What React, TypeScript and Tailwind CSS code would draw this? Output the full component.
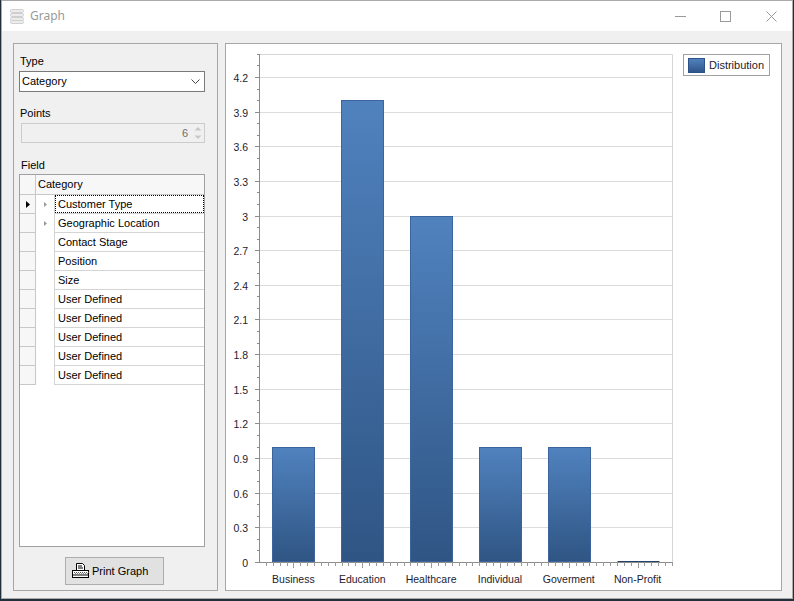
import React from "react";

const ROWS = [
  "Customer Type",
  "Geographic Location",
  "Contact Stage",
  "Position",
  "Size",
  "User Defined",
  "User Defined",
  "User Defined",
  "User Defined",
  "User Defined",
];

const DATA = [
  { label: "Business", value: 1 },
  { label: "Education", value: 4 },
  { label: "Healthcare", value: 3 },
  { label: "Individual", value: 1 },
  { label: "Goverment", value: 1 },
  { label: "Non-Profit", value: 0 },
];

// chart geometry in page coordinates
const AX = 259;
const AY = 562;
const RIGHT = 672;
const TOP = 54;
const UNIT = 115.48; // px per 1.0
const CAT = (RIGHT - AX) / DATA.length;

function TitleIcon() {
  return (
    <svg width="14" height="15" viewBox="0 0 14 15">
      {[0, 4, 8, 11].map((y) => (
        <rect key={y} x="0.5" y={y + 0.5} width="13" height="3" rx="1.2" fill="#ececec" stroke="#cfcfcf" />
      ))}
    </svg>
  );
}

function PrinterIcon() {
  return (
    <svg width="17" height="16" viewBox="0 0 17 16">
      <path d="M4.5 0.5h6l2 2v5h-8z" fill="#fff" stroke="#000" />
      <path d="M6 3h4M6 5h5" stroke="#000" />
      <rect x="0.5" y="7.5" width="16" height="7" fill="#fff" stroke="#000" />
      <path d="M1 12h15" stroke="#000" />
      {Array.from({ length: 8 }).map((_, i) => (
        <rect key={i} x={2 + i * 2} y="9" width="1" height="1" fill="#555" />
      ))}
      {Array.from({ length: 7 }).map((_, i) => (
        <rect key={i} x={3 + i * 2} y="10" width="1" height="1" fill="#888" />
      ))}
    </svg>
  );
}

function Chart() {
  const yTicks = Array.from({ length: 45 }, (_, i) => i);
  const xTicks = Array.from({ length: DATA.length * 10 }, (_, i) => i + 1);
  return (
    <svg width="457" height="546" className="shrink-0">
      <defs>
        <linearGradient id="bar" x1="0" y1="0" x2="0" y2="1">
          <stop offset="0" stopColor="#5082be" />
          <stop offset="1" stopColor="#2f5584" />
        </linearGradient>
      </defs>
      <g transform="translate(-226,-44)">
        {/* plot frame */}
        <path d={`M${AX} ${TOP + 0.5}H${RIGHT + 0.5}V${AY}`} fill="none" stroke="#d6d6d6" />
        {/* gridlines and y ticks */}
        {yTicks.map((i) => {
          const y = Math.round(AY - i * (UNIT / 10)) + 0.5;
          const major = i % 3 === 0;
          return (
            <g key={i}>
              {major && i > 0 ? <line x1={AX} x2={RIGHT} y1={y} y2={y} stroke="#dcdcdc" /> : null}
              <line x1={major ? 255 : 257} x2={AX} y1={y} y2={y} stroke="#8c8c8c" />
              {major ? (
                <text x="248" y={y + 4} textAnchor="end" fontSize="10.5" fill="#1c1c30" fontFamily="'Liberation Sans', Arial, sans-serif">
                  {String(Number((i / 10).toFixed(1)))}
                </text>
              ) : null}
            </g>
          );
        })}
        {/* bars */}
        {DATA.map((d, i) => {
          const cx = AX + CAT * (i + 0.5);
          const x = Math.round(cx - 21) + 0.5;
          const h = Math.round(d.value * UNIT);
          if (h === 0) {
            return <line key={d.label} x1={x} x2={x + 42} y1={AY - 0.5} y2={AY - 0.5} stroke="#23406a" />;
          }
          return (
            <rect key={d.label} x={x} y={AY - h + 0.5} width="42" height={h - 1} fill="url(#bar)" stroke="#3b659c" />
          );
        })}
        {/* axes */}
        <line x1={AX + 0.5} x2={AX + 0.5} y1={TOP} y2={AY + 1} stroke="#8c8c8c" />
        <line x1={AX} x2={RIGHT + 1} y1={AY + 0.5} y2={AY + 0.5} stroke="#8c8c8c" />
        {xTicks.map((i) => {
          const x = Math.round(AX + (CAT / 10) * i) + 0.5;
          const major = i % 10 === 5;
          return <line key={i} x1={x} x2={x} y1={AY} y2={AY + (major ? 6 : 4)} stroke="#9a9a9a" />;
        })}
        {DATA.map((d, i) => (
          <text
            key={d.label}
            x={AX + CAT * (i + 0.5)}
            y="583"
            textAnchor="middle"
            fontSize="10.5"
            fill="#1c1c30"
            fontFamily="'Liberation Sans', Arial, sans-serif"
          >
            {d.label}
          </text>
        ))}
      </g>
    </svg>
  );
}

export default function App() {
  return (
    <div className="w-[794px] h-[601px] bg-[#22303e] overflow-hidden font-['Liberation_Sans',Arial,sans-serif] text-[11px] text-black">
      <div className="ml-px w-[792px] h-[599px] border border-[#aaaaaa] bg-[#f0f0f0] flex flex-col">
        {/* title bar */}
        <div className="h-[30px] bg-white flex items-center shrink-0">
          <div className="ml-[8px] mt-[1px]">
            <TitleIcon />
          </div>
          <span className="ml-[6px] text-[12px] text-[#9a9a9a] font-['Noto_Sans',sans-serif]">Graph</span>
          <div className="ml-auto mr-[15px] flex items-center">
            <div className="w-[11px] h-px bg-[#9a9a9a] mt-[1px]" />
            <div className="ml-[34px] w-[11px] h-[11px] border border-[#9a9a9a]" />
            <svg className="ml-[35px]" width="11" height="11" viewBox="0 0 11 11">
              <path d="M0.5 0.5L10.5 10.5M10.5 0.5L0.5 10.5" stroke="#9a9a9a" />
            </svg>
          </div>
        </div>

        {/* body */}
        <div className="flex-1 flex gap-[7px] pl-[11px] pr-[10px] pt-[12px] pb-[7px]">
          {/* left panel */}
          <div className="w-[205px] border border-[#a6a6a6] flex flex-col pl-[5px]">
            <div className="mt-[11px] ml-px leading-[13px]">Type</div>
            <div className="mt-[3px] w-[186px] h-[21px] bg-white border border-[#7a7a7a] flex items-center pl-[2px]">
              <span>Category</span>
              <svg className="ml-auto mr-[4px]" width="9" height="6" viewBox="0 0 9 6">
                <path d="M0.5 0.5L4.5 4.5L8.5 0.5" fill="none" stroke="#444" />
              </svg>
            </div>
            <div className="mt-[15px] ml-px leading-[13px]">Points</div>
            <div className="mt-[3px] ml-[2px] w-[184px] h-[20px] bg-[#f0f0f0] border border-[#cccccc] flex items-center">
              <span className="ml-auto text-[#6d6d6d]">6</span>
              <svg className="ml-[6px] mr-[2px]" width="8" height="14" viewBox="0 0 8 14">
                <path d="M0.5 4.5L4 1L7.5 4.5z" fill="#c8c8c8" />
                <path d="M0.5 9.5L4 13L7.5 9.5z" fill="#c8c8c8" />
              </svg>
            </div>
            <div className="mt-[16px] ml-[2px] leading-[13px]">Field</div>

            {/* grid */}
            <div className="mt-[2px] w-[186px] h-[373px] bg-white border border-[#a0a0a0] flex flex-col">
              <div className="h-[20px] flex border-b border-[#c8c8c8] bg-[#f7f7f7]">
                <div className="w-[16px] border-r border-[#c8c8c8]" />
                <div className="pl-[2px] flex items-center">Category</div>
              </div>
              {ROWS.map((name, i) => (
                <div key={i} className="h-[19px] flex">
                  <div className="w-[16px] border-r border-b border-[#c8c8c8] bg-[#f7f7f7] flex items-center justify-center">
                    {i === 0 ? (
                      <svg width="4" height="7" viewBox="0 0 4 7">
                        <path d="M0 0L4 3.5L0 7z" fill="#000" />
                      </svg>
                    ) : null}
                  </div>
                  <div className="w-[18px] flex items-center justify-center">
                    {i < 2 ? (
                      <svg width="3" height="5" viewBox="0 0 3 5">
                        <path d="M0 0L3 2.5L0 5z" fill="#9a9a9a" />
                      </svg>
                    ) : null}
                  </div>
                  <div className="flex-1 border-l border-b border-[#d4d4d4]">
                    <div
                      className={`h-full flex items-center pl-[2px] ${
                        i === 0 ? "border border-dotted border-black" : "border border-transparent"
                      }`}
                    >
                      {name}
                    </div>
                  </div>
                </div>
              ))}
            </div>

            <button className="mt-[10px] ml-[46px] w-[99px] h-[28px] bg-[#e1e1e1] border border-[#adadad] flex items-center pl-[6px]">
              <PrinterIcon />
              <span className="ml-[3px]">Print Graph</span>
            </button>
          </div>

          {/* right panel */}
          <div className="flex-1 border border-[#a6a6a6] bg-white flex">
            <Chart />
            <div className="mt-[10px] w-[87px] h-[22px] border border-[#a0a0a0] flex items-center pl-[4px] self-start">
              <div className="w-[17px] h-[15px] border border-[#2c5287] bg-gradient-to-b from-[#5082be] to-[#30568a]" />
              <span className="ml-[4px] text-[#1c1c30]">Distribution</span>
            </div>
          </div>
        </div>
      </div>
    </div>
  );
}
